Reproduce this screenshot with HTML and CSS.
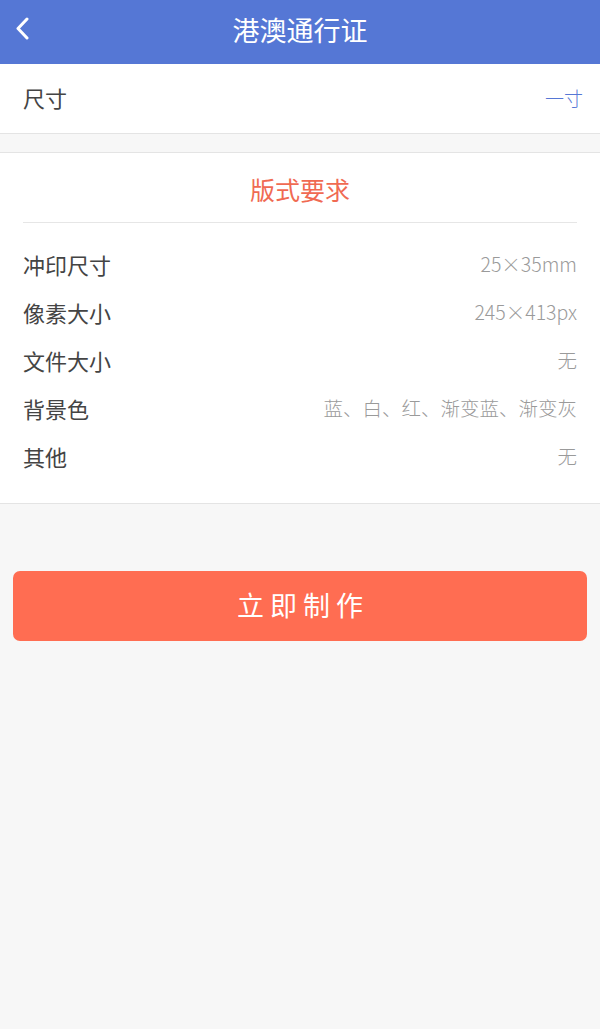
FILE: index.html
```html
<!DOCTYPE html>
<html lang="zh">
<head>
<meta charset="utf-8">
<title>港澳通行证</title>
<link rel="stylesheet" href="styles.css">
</head>
<body>
<header class="nav">
  <span class="back"><svg width="16" height="24" viewBox="0 0 16 24"><path d="M12 2 L3 11.5 L12 21" fill="none" stroke="#fff" stroke-width="3" stroke-linecap="round" stroke-linejoin="round"/></svg></span>
  <h1 class="title">港澳通行证</h1>
</header>
<section class="size-row">
  <span class="label">尺寸</span>
  <span class="size-value">一寸</span>
</section>
<section class="card">
  <h2 class="card-title">版式要求</h2>
  <div class="rows">
    <div class="row"><span class="label">冲印尺寸</span><span class="value">25×35mm</span></div>
    <div class="row"><span class="label">像素大小</span><span class="value">245×413px</span></div>
    <div class="row"><span class="label">文件大小</span><span class="value">无</span></div>
    <div class="row"><span class="label">背景色</span><span class="value">蓝、白、红、渐变蓝、渐变灰</span></div>
    <div class="row"><span class="label">其他</span><span class="value">无</span></div>
  </div>
</section>
<div class="action">
  <button class="make">立即制作</button>
</div>
</body>
</html>
```
FILE: styles.css
```css
html, body {
  margin: 0;
  padding: 0;
}
body {
  background: #f7f7f7;
  font-family: "Noto Sans CJK SC", "Liberation Sans", sans-serif;
  min-height: 1029px;
}
.nav {
  height: 64px;
  background: #5577d5;
  display: flex;
  align-items: center;
  justify-content: center;
  position: relative;
}
.back {
  position: absolute;
  left: 15px;
  top: 17px;
  width: 16px;
  height: 24px;
  display: flex;
}
.title {
  margin: 0;
  color: #fff;
  font-size: 27px;
  font-weight: 400;
  line-height: 1;
  margin-top: -6px;
}
.size-row {
  height: 69px;
  background: #fff;
  border-bottom: 1px solid #e4e4e4;
  display: flex;
  align-items: center;
  justify-content: space-between;
  padding: 0 17px 3px 23px;
  box-sizing: border-box;
  height: 70px;
}
.label {
  font-size: 22px;
  color: #444;
  line-height: 1;
}
.size-value {
  font-size: 19px;
  color: #5677d5;
  line-height: 1;
  font-weight: 300;
}
.card {
  margin-top: 18px;
  background: #fff;
  border-top: 1px solid #e4e4e4;
  border-bottom: 1px solid #e4e4e4;
  padding: 0 23px 23px;
}
.card-title {
  margin: 0;
  height: 70px;
  border-bottom: 1px solid #e6e6e6;
  display: flex;
  align-items: center;
  justify-content: center;
  font-size: 25px;
  font-weight: 400;
  color: #f06a52;
  padding-top: 3px;
  box-sizing: border-box;
}
.rows {
  padding-top: 17px;
}
.row {
  height: 48px;
  display: flex;
  align-items: center;
  justify-content: space-between;
}
.value {
  font-size: 19.5px;
  color: #9a9a9a;
  line-height: 1;
  font-weight: 300;
}
.action {
  padding: 67px 13px 0;
}
.make {
  display: block;
  width: 100%;
  height: 70px;
  border: none;
  border-radius: 7px;
  background: #ff6d52;
  color: #fff;
  font-family: "Noto Sans CJK SC", "Liberation Sans", sans-serif;
  font-size: 27px;
  letter-spacing: 6px;
  padding: 0 0 4px 6px;
}
```
